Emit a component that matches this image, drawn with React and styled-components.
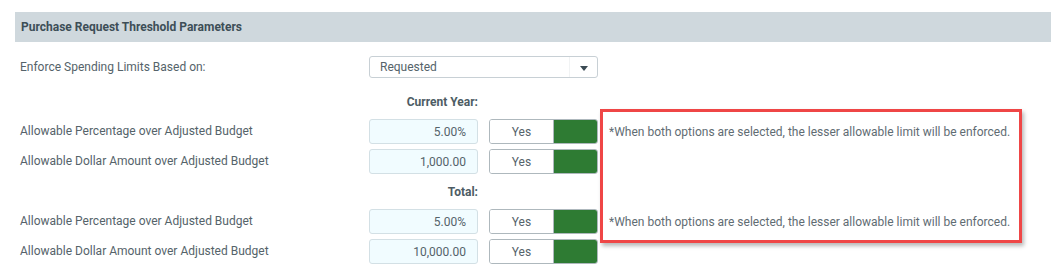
import React from "react";
import styled, { createGlobalStyle } from "styled-components";

const GlobalStyle = createGlobalStyle`
  body {
    margin: 0;
    background: #ffffff;
    font-family: Roboto, "Liberation Sans", sans-serif;
  }
`;

const Page = styled.div`
  padding: 12px 0 0 15px;
`;

const SectionHeader = styled.div`
  height: 30px;
  display: flex;
  align-items: center;
  padding-left: 6px;
  background-color: #cfd8dd;
  color: #3d4e57;
  font-size: 12px;
  font-weight: 700;
`;

const Form = styled.div`
  position: relative;
  margin: 14px 0 0 5px;
  display: grid;
  grid-template-columns: 338px 109px 109px 1fr;
  grid-template-rows: 28px;
  grid-auto-rows: 25px;
  column-gap: 11px;
  row-gap: 5px;
  align-items: center;
`;

const Label = styled.div`
  grid-column: 1;
  font-size: 12px;
  color: #55636a;
  line-height: ${props => (props.top ? "22px" : "25px")};
  align-self: ${props => (props.top ? "start" : "center")};
`;

const Heading = styled.div`
  grid-column: 1 / 3;
  text-align: right;
  font-size: 12px;
  font-weight: 700;
  color: #4d5c64;
`;

const Select = styled.div`
  grid-column: 2 / 4;
  align-self: start;
  height: 22px;
  box-sizing: border-box;
  border: 1px solid #c8d0d5;
  border-radius: 3px;
  display: flex;
  align-items: center;
  font-size: 12px;
  color: #55636a;
`;

const SelectValue = styled.span`
  flex: 1;
  padding-left: 10px;
`;

const SelectArrow = styled.span`
  width: 27px;
  height: 100%;
  border-left: 1px solid #f1f3f4;
  display: flex;
  align-items: center;
  justify-content: center;
  &::after {
    content: "";
    border-left: 4px solid transparent;
    border-right: 4px solid transparent;
    border-top: 5px solid #3b4b54;
    margin-top: 2px;
  }
`;

const Amount = styled.div`
  grid-column: 2;
  height: 25px;
  box-sizing: border-box;
  border: 1px solid #d3e0e5;
  border-radius: 3px;
  background-color: #f1fcff;
  display: flex;
  align-items: center;
  justify-content: flex-end;
  padding-right: 11px;
  font-size: 12px;
  color: #55636a;
`;

const Toggle = styled.div`
  grid-column: 3;
  height: 25px;
  box-sizing: border-box;
  border: 1px solid #aeb8bd;
  border-radius: 3px;
  display: flex;
  overflow: hidden;
`;

const ToggleLabel = styled.span`
  flex: 1;
  display: flex;
  align-items: center;
  justify-content: center;
  font-size: 12px;
  color: #55636a;
  background: #ffffff;
  border-right: 1px solid #aeb8bd;
`;

const ToggleKnob = styled.span`
  width: 43px;
  background-color: ${props => (props.on ? "#2e7b33" : "#cfd8dd")};
`;

const Note = styled.div`
  grid-column: 4;
  font-size: 12px;
  color: #5f6c73;
  white-space: nowrap;
`;

const Highlight = styled.div`
  position: absolute;
  left: 580px;
  top: 53px;
  width: 422px;
  height: 134px;
  box-sizing: border-box;
  border: 3px solid #ef4646;
  box-shadow: 2px 3px 4px rgba(0, 0, 0, 0.28);
  pointer-events: none;
`;

const NOTE = "*When both options are selected, the lesser allowable limit will be enforced.";

const groups = [
  {
    title: "Current Year:",
    rows: [
      { label: "Allowable Percentage over Adjusted Budget", value: "5.00%", note: true },
      { label: "Allowable Dollar Amount over Adjusted Budget", value: "1,000.00" },
    ],
  },
  {
    title: "Total:",
    rows: [
      { label: "Allowable Percentage over Adjusted Budget", value: "5.00%", note: true },
      { label: "Allowable Dollar Amount over Adjusted Budget", value: "10,000.00" },
    ],
  },
];

export default function App() {
  return (
    <Page>
      <GlobalStyle />
      <SectionHeader>Purchase Request Threshold Parameters</SectionHeader>
      <Form>
        <Label top>Enforce Spending Limits Based on:</Label>
        <Select>
          <SelectValue>Requested</SelectValue>
          <SelectArrow />
        </Select>
        {groups.map(group => (
          <React.Fragment key={group.title}>
            <Heading>{group.title}</Heading>
            {group.rows.map(row => (
              <React.Fragment key={row.label + row.value}>
                <Label>{row.label}</Label>
                <Amount>{row.value}</Amount>
                <Toggle>
                  <ToggleLabel>Yes</ToggleLabel>
                  <ToggleKnob on />
                </Toggle>
                {row.note && <Note>{NOTE}</Note>}
              </React.Fragment>
            ))}
          </React.Fragment>
        ))}
        <Highlight />
      </Form>
    </Page>
  );
}
